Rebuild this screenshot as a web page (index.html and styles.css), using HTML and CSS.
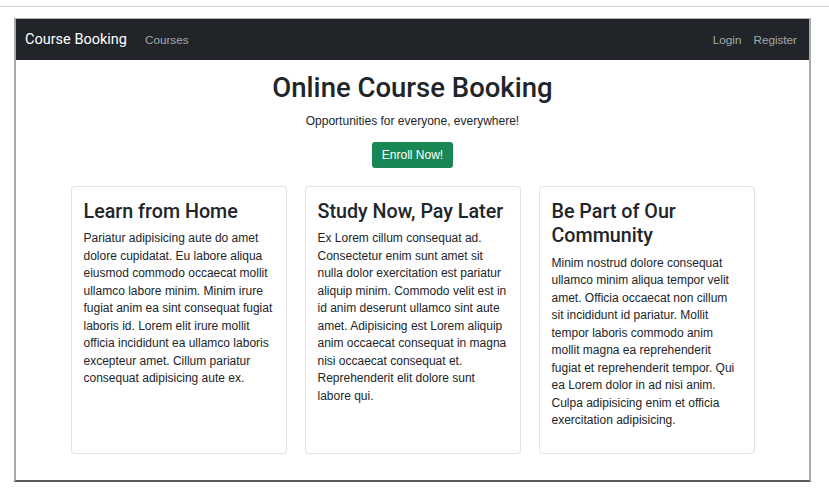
FILE: index.html
```html
<!DOCTYPE html>
<html lang="en">
<head>
<meta charset="utf-8">
<title>Course Booking</title>
<link rel="stylesheet" href="styles.css">
</head>
<body>
<div class="topline"></div>
<div class="frame">
  <nav class="navbar">
    <div class="nav-left">
      <a class="brand" href="#">Course Booking</a>
      <a class="nav-link" href="#">Courses</a>
    </div>
    <div class="nav-right">
      <a class="nav-link" href="#">Login</a>
      <a class="nav-link" href="#">Register</a>
    </div>
  </nav>
  <main class="main">
    <section class="hero">
      <h1 class="hero-title">Online Course Booking</h1>
      <p class="hero-sub">Opportunities for everyone, everywhere!</p>
      <a class="btn-enroll" href="#">Enroll Now!</a>
    </section>
    <section class="cards">
      <div class="card">
        <h2 class="card-title">Learn from Home</h2>
        <p class="card-text">Pariatur adipisicing aute do amet dolore cupidatat. Eu labore aliqua eiusmod commodo occaecat mollit ullamco labore minim. Minim irure fugiat anim ea sint consequat fugiat laboris id. Lorem elit irure mollit officia incididunt ea ullamco laboris excepteur amet. Cillum pariatur consequat adipisicing aute ex.</p>
      </div>
      <div class="card">
        <h2 class="card-title">Study Now, Pay Later</h2>
        <p class="card-text">Ex Lorem cillum consequat ad. Consectetur enim sunt amet sit nulla dolor exercitation est pariatur aliquip minim. Commodo velit est in id anim deserunt ullamco sint aute amet. Adipisicing est Lorem aliquip anim occaecat consequat in magna nisi occaecat consequat et. Reprehenderit elit dolore sunt labore qui.</p>
      </div>
      <div class="card">
        <h2 class="card-title">Be Part of Our Community</h2>
        <p class="card-text">Minim nostrud dolore consequat ullamco minim aliqua tempor velit amet. Officia occaecat non cillum sit incididunt id pariatur. Mollit tempor laboris commodo anim mollit magna ea reprehenderit fugiat et reprehenderit tempor. Qui ea Lorem dolor in ad nisi anim. Culpa adipisicing enim et officia exercitation adipisicing.</p>
      </div>
    </section>
  </main>
</div>
</body>
</html>
```

FILE: styles.css
```css
* { box-sizing: border-box; }
html, body {
  margin: 0;
  padding: 0;
  background: #ffffff;
  font-family: "Liberation Sans", Arial, sans-serif;
  color: #212529;
}
.topline {
  margin-top: 6px;
  height: 1px;
  background: #d2d2d2;
}
.frame {
  margin: 11px 0 0 14px;
  width: 797px;
  border-top: 1px solid #b0b0b0;
  border-left: 2px solid #a9a9a9;
  border-right: 2px solid #a9a9a9;
  border-bottom: 2px solid #5a5a5a;
}
.navbar {
  height: 41px;
  background: #212529;
  display: flex;
  align-items: center;
  justify-content: space-between;
  padding: 0 12px 0 9px;
}
.nav-left, .nav-right {
  display: flex;
  align-items: center;
}
.brand {
  color: #ffffff;
  text-decoration: none;
  font-family: Roboto, "Liberation Sans", sans-serif;
  font-size: 14.5px;
  margin-right: 18px;
}
.nav-link {
  color: rgba(255, 255, 255, 0.6);
  text-decoration: none;
  font-size: 11.7px;
}
.nav-right .nav-link { margin-left: 12px; }
.main {
  padding: 11px 0 26px;
}
.hero {
  display: flex;
  flex-direction: column;
  align-items: center;
}
.hero-title {
  margin: 0;
  font-family: Roboto, "Liberation Sans", sans-serif;
  font-size: 27.5px;
  font-weight: 500;
  line-height: 34px;
}
.hero-sub {
  margin: 7px 0 0;
  font-size: 12px;
  line-height: 18px;
}
.btn-enroll {
  margin-top: 12px;
  display: inline-block;
  background: #198754;
  color: #ffffff;
  text-decoration: none;
  font-size: 12px;
  line-height: 16px;
  padding: 5px 9.5px;
  border-radius: 3px;
}
.cards {
  margin: 18px auto 0;
  width: 684px;
  display: grid;
  grid-template-columns: repeat(3, 1fr);
  gap: 18px;
}
.card {
  border: 1px solid #e2e3e5;
  border-radius: 4px;
  padding: 12.5px 12px 12px;
}
.card-title {
  margin: 0 0 6px;
  font-family: Roboto, "Liberation Sans", sans-serif;
  font-size: 19.7px;
  font-weight: 500;
  line-height: 24.5px;
}
.card-text {
  margin: 0 0 11px;
  font-size: 12px;
  line-height: 17.5px;
}
```
